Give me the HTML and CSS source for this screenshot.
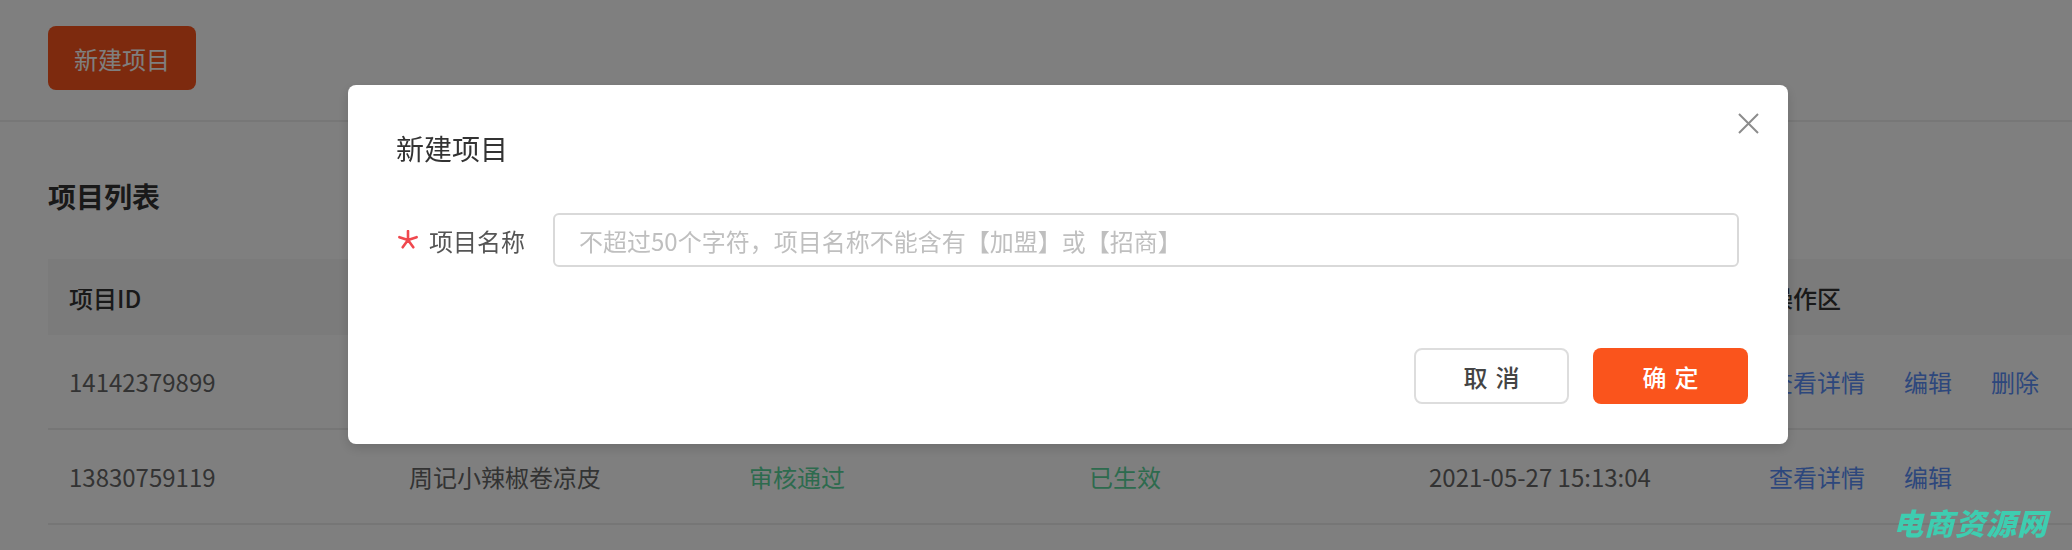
FILE: index.html
```html
<!DOCTYPE html>
<html lang="zh-CN">
<head>
  <meta charset="UTF-8">
  <meta name="viewport" content="width=device-width, initial-scale=1.0">
  <title>项目列表</title>
  <link rel="stylesheet" href="styles.css">
</head>
<body>
  <div class="toolbar">
    <button type="button" class="btn-create">新建项目</button>
  </div>

  <div class="list-section">
    <h2>项目列表</h2>
    <table class="project-table">
      <thead>
        <tr>
          <th>项目ID</th>
          <th>项目名称</th>
          <th>审核状态</th>
          <th>生效状态</th>
          <th>创建时间</th>
          <th>操作区</th>
        </tr>
      </thead>
      <tbody>
        <tr>
          <td>14142379899</td>
          <td>张记麻辣烫</td>
          <td class="status">审核通过</td>
          <td class="status">已生效</td>
          <td></td>
          <td class="actions"><a href="#">查看详情</a><a href="#">编辑</a><a href="#">删除</a></td>
        </tr>
        <tr>
          <td>13830759119</td>
          <td>周记小辣椒卷凉皮</td>
          <td class="status">审核通过</td>
          <td class="status">已生效</td>
          <td>2021-05-27 15:13:04</td>
          <td class="actions"><a href="#">查看详情</a><a href="#">编辑</a></td>
        </tr>
      </tbody>
    </table>
  </div>

  <div class="mask">
    <div class="modal">
      <svg class="modal-close" width="21" height="21" viewBox="0 0 21 21">
        <path d="M1 1L20 20M20 1L1 20" stroke="#8c8c8c" stroke-width="2" fill="none"/>
      </svg>
      <div class="modal-title">新建项目</div>
      <div class="form-row">
        <svg class="required" width="20" height="20" viewBox="0 0 20 20">
          <path d="M10 10V1M10 10L18.6 7.2M10 10L15.3 17.3M10 10L4.7 17.3M10 10L1.4 7.2" stroke="#f0484e" stroke-width="2.6" stroke-linecap="round" fill="none"/>
        </svg>
        <label for="projectName">项目名称</label>
        <input id="projectName" type="text" placeholder="不超过50个字符，项目名称不能含有【加盟】或【招商】">
      </div>
      <div class="modal-footer">
        <button type="button" class="btn-cancel">取消</button>
        <button type="button" class="btn-ok">确定</button>
      </div>
    </div>
  </div>

  <div class="watermark">电商资源网</div>
</body>
</html>
```

FILE: styles.css
```css
body {
  margin: 0;
  width: 2072px;
  height: 550px;
  overflow: hidden;
  background: #fff;
  font-family: "Noto Sans CJK SC", "Noto Sans", sans-serif;
  color: #333;
}
.toolbar {
  padding: 26px 48px 30px;
  border-bottom: 2px solid #eeeeee;
}
.btn-create {
  display: block;
  width: 148px;
  height: 64px;
  border: none;
  border-radius: 8px;
  background: #fa541c;
  color: #fff;
  font-family: inherit;
  font-size: 24px;
}
.list-section {
  padding: 0 0 0 48px;
}
.list-section h2 {
  margin: 54px 0 43px;
  font-size: 28px;
  line-height: 40px;
  font-weight: 700;
  color: #333;
}
.project-table {
  width: 2040px;
  table-layout: fixed;
  border-collapse: collapse;
  font-size: 24px;
}
.project-table th {
  height: 76px;
  padding: 0 21px;
  text-align: left;
  font-weight: 500;
  color: #333;
  background: #f6f6f6;
}
.project-table td {
  height: 93px;
  padding: 0 21px;
  color: #666;
  border-bottom: 2px solid #ececec;
  white-space: nowrap;
}
.project-table td.status {
  color: #5bd69d;
}
.actions a {
  color: #5b8ff9;
  text-decoration: none;
  margin-right: 39px;
}
.mask {
  position: fixed;
  inset: 0;
  background: rgba(0, 0, 0, 0.5);
  padding: 85px 0 0 348px;
}
.modal {
  position: relative;
  width: 1440px;
  box-sizing: border-box;
  padding: 43px 40px 40px 48px;
  background: #fff;
  border-radius: 8px;
  box-shadow: 0 4px 12px rgba(0, 0, 0, 0.15);
}
.modal-close {
  position: absolute;
  top: 28px;
  right: 29px;
}
.modal-title {
  font-size: 28px;
  line-height: 40px;
  color: #333;
}
.form-row {
  display: flex;
  align-items: center;
  margin: 45px 9px 0 0;
}
.required {
  margin: 0 11px 0 2px;
}
.form-row label {
  width: 96px;
  margin-right: 28px;
  font-size: 24px;
  color: #555;
}
.form-row input {
  flex: 1;
  height: 54px;
  box-sizing: border-box;
  padding: 0 24px;
  border: 2px solid #d9d9d9;
  border-radius: 6px;
  font-family: inherit;
  font-size: 24px;
  outline: none;
}
.form-row input::placeholder {
  color: #bfbfbf;
}
.modal-footer {
  display: flex;
  justify-content: flex-end;
  gap: 24px;
  margin-top: 81px;
}
.modal-footer button {
  width: 155px;
  height: 56px;
  padding: 0 0 0 8px;
  border-radius: 8px;
  font-family: inherit;
  font-size: 24px;
  font-weight: 500;
  letter-spacing: 8px;
}
.btn-cancel {
  background: #fff;
  border: 2px solid #dddddd;
  color: #444;
}
.btn-ok {
  background: #fa541c;
  border: none;
  color: #fff;
}
.watermark {
  position: absolute;
  right: 24px;
  bottom: 6px;
  font-size: 30px;
  font-weight: 900;
  font-style: italic;
  color: #3ecdb0;
  letter-spacing: 1px;
}
```
